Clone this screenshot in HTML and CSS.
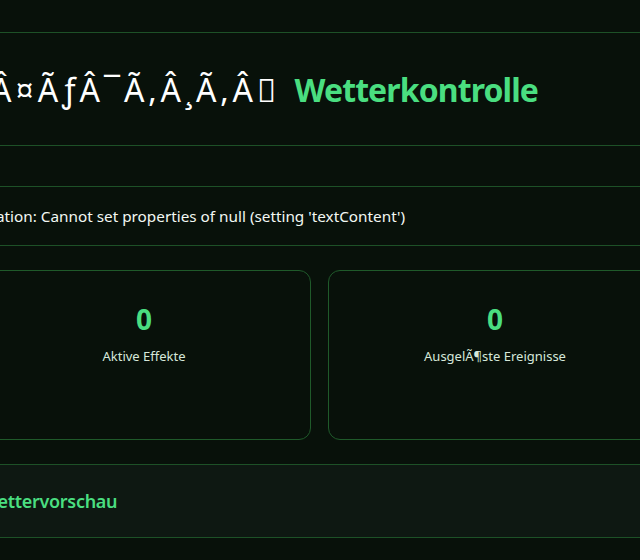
FILE: index.html
```html
<!DOCTYPE html>
<html lang="de">
<head>
<meta charset="utf-8">
<title>Wetterkontrolle</title>
<link rel="stylesheet" href="styles.css">
</head>
<body>
<div class="page">
  <header class="header">
    <h1 class="title"><span class="moji">ðŸŒÂ¤ÃƒÂ¯Ã‚Â¸Ã‚Â&#xFFFF;</span> <span class="brand">Wetterkontrolle</span></h1>
  </header>
  <div class="error">Fehler bei der Wettergeneration: Cannot set properties of null (setting 'textContent')</div>
  <section class="stats">
    <div class="card">
      <div class="num">0</div>
      <div class="label">Aktive Effekte</div>
    </div>
    <div class="card">
      <div class="num">0</div>
      <div class="label">AusgelÃ¶ste Ereignisse</div>
    </div>
  </section>
  <section class="preview">
    <h2 class="preview-title">Wettervorschau</h2>
  </section>
</div>
</body>
</html>
```
FILE: styles.css
```css
html, body {
  margin: 0;
  padding: 0;
  background: #08110a;
  overflow: hidden;
}
body {
  font-family: "Noto Sans", "Open Sans", sans-serif;
  color: #e6f2e8;
}
.page {
  width: 720px;
  margin-left: -40px;
  padding-top: 32px;
}
.header {
  border-top: 1px solid #1d5127;
  border-bottom: 1px solid #1d5127;
  height: 112px;
  display: flex;
  align-items: center;
  justify-content: flex-end;
  padding-right: 142px;
}
.title {
  margin: 0;
  font-size: 32px;
  font-weight: 400;
  white-space: nowrap;
  color: #ffffff;
}
.moji {
  margin-right: 6px;
  letter-spacing: 4px;
}
.brand {
  color: #4ade80;
  font-weight: 700;
  letter-spacing: -0.9px;
}
.error {
  margin-top: 40px;
  border-top: 1px solid #1d5127;
  border-bottom: 1px solid #1d5127;
  height: 58px;
  display: flex;
  align-items: center;
  justify-content: flex-end;
  padding-right: 275px;
  font-size: 15.3px;
  white-space: nowrap;
  color: #f2f8f3;
}
.stats {
  margin-top: 24px;
  display: grid;
  grid-template-columns: 334px 334px;
  gap: 17px;
  padding-left: 17px;
}
.card {
  height: 170px;
  border: 1px solid #1f5a2a;
  border-radius: 12px;
  display: flex;
  flex-direction: column;
  align-items: center;
  padding-top: 30px;
  box-sizing: border-box;
}
.num {
  font-size: 28px;
  font-weight: 700;
  color: #4ade80;
  line-height: 36px;
}
.label {
  margin-top: 10px;
  font-size: 13px;
  color: #d6e8da;
}
.preview {
  margin-top: 24px;
  background: #0e1812;
  border-top: 1px solid #1d5127;
  border-bottom: 1px solid #1d5127;
  height: 72px;
  display: flex;
  align-items: center;
  padding-left: 21px;
}
.preview-title {
  margin: 0;
  font-size: 18px;
  font-weight: 600;
  letter-spacing: -0.3px;
  color: #4ade80;
}
```
